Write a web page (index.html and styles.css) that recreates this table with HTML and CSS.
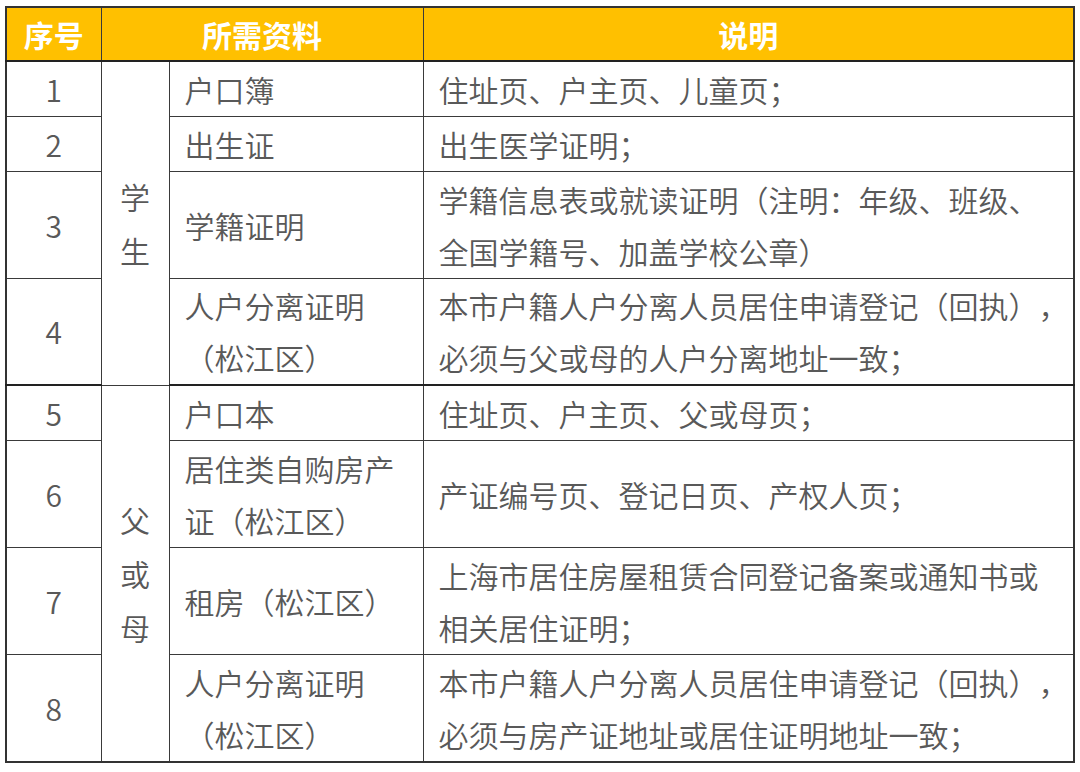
FILE: index.html
```html
<!DOCTYPE html>
<html lang="zh-CN">
<head>
<meta charset="utf-8">
<title>所需资料</title>
<link rel="stylesheet" href="styles.css">
</head>
<body>
<table class="tbl">
  <colgroup>
    <col class="c-no">
    <col class="c-grp">
    <col class="c-item">
    <col class="c-desc">
  </colgroup>
  <thead>
    <tr class="head">
      <th>序号</th>
      <th colspan="2">所需资料</th>
      <th>说明</th>
    </tr>
  </thead>
  <tbody>
    <tr class="r1">
      <td class="no">1</td>
      <td class="grp" rowspan="4">学<br>生</td>
      <td class="item">户口簿</td>
      <td class="desc">住址页、户主页、儿童页；</td>
    </tr>
    <tr class="r1">
      <td class="no">2</td>
      <td class="item">出生证</td>
      <td class="desc">出生医学证明；</td>
    </tr>
    <tr class="r2">
      <td class="no">3</td>
      <td class="item">学籍证明</td>
      <td class="desc">学籍信息表或就读证明（注明：年级、班级、<br>全国学籍号、加盖学校公章）</td>
    </tr>
    <tr class="r2 sep">
      <td class="no">4</td>
      <td class="item">人户分离证明<br>（松江区）</td>
      <td class="desc">本市户籍人户分离人员居住申请登记（回执），<br>必须与父或母的人户分离地址一致；</td>
    </tr>
    <tr class="r1">
      <td class="no">5</td>
      <td class="grp" rowspan="4">父<br>或<br>母</td>
      <td class="item">户口本</td>
      <td class="desc">住址页、户主页、父或母页；</td>
    </tr>
    <tr class="r2">
      <td class="no">6</td>
      <td class="item">居住类自购房产<br>证（松江区）</td>
      <td class="desc">产证编号页、登记日页、产权人页；</td>
    </tr>
    <tr class="r2">
      <td class="no">7</td>
      <td class="item">租房（松江区）</td>
      <td class="desc">上海市居住房屋租赁合同登记备案或通知书或<br>相关居住证明；</td>
    </tr>
    <tr class="r3">
      <td class="no">8</td>
      <td class="item">人户分离证明<br>（松江区）</td>
      <td class="desc">本市户籍人户分离人员居住申请登记（回执），<br>必须与房产证地址或居住证明地址一致；</td>
    </tr>
  </tbody>
</table>
</body>
</html>
```

FILE: styles.css
```css
html, body {
  margin: 0;
  padding: 0;
  background: #ffffff;
}

body {
  font-family: "Noto Sans CJK SC", "Noto Sans", sans-serif;
  color: #595959;
  text-spacing-trim: space-all;
}

.tbl {
  margin: 6px 0 0 5px;
  width: 1068px;
  border-collapse: collapse;
  table-layout: fixed;
  border: 2px solid #333333;
}

.c-no { width: 95px; }
.c-grp { width: 68px; }
.c-item { width: 254px; }
.c-desc { width: 651px; }

.tbl th,
.tbl td {
  border: 1px solid #3a3a3a;
  padding: 0;
  font-size: 30px;
  font-weight: 350;
  line-height: 52px;
  white-space: nowrap;
  overflow: hidden;
  text-spacing-trim: space-all;
}

.head {
  height: 54px;
}

.head th {
  background: #ffc000;
  color: #ffffff;
  font-weight: 700;
  font-size: 30px;
  text-align: center;
  border-bottom: 2px solid #222222;
  vertical-align: middle;
}

.r1 { height: 55px; }
.r2 { height: 107px; }
.r3 { height: 108px; }

.sep td {
  border-bottom: 2px solid #222222;
}

.no {
  text-align: center;
  vertical-align: middle;
}

.grp {
  text-align: center;
  vertical-align: middle;
  line-height: 54px !important;
  border-bottom: 2px solid #222222;
}

.item {
  text-align: left;
  padding-left: 15px !important;
  vertical-align: middle;
}

.desc {
  text-align: left;
  padding-left: 15px !important;
  vertical-align: middle;
}
```
